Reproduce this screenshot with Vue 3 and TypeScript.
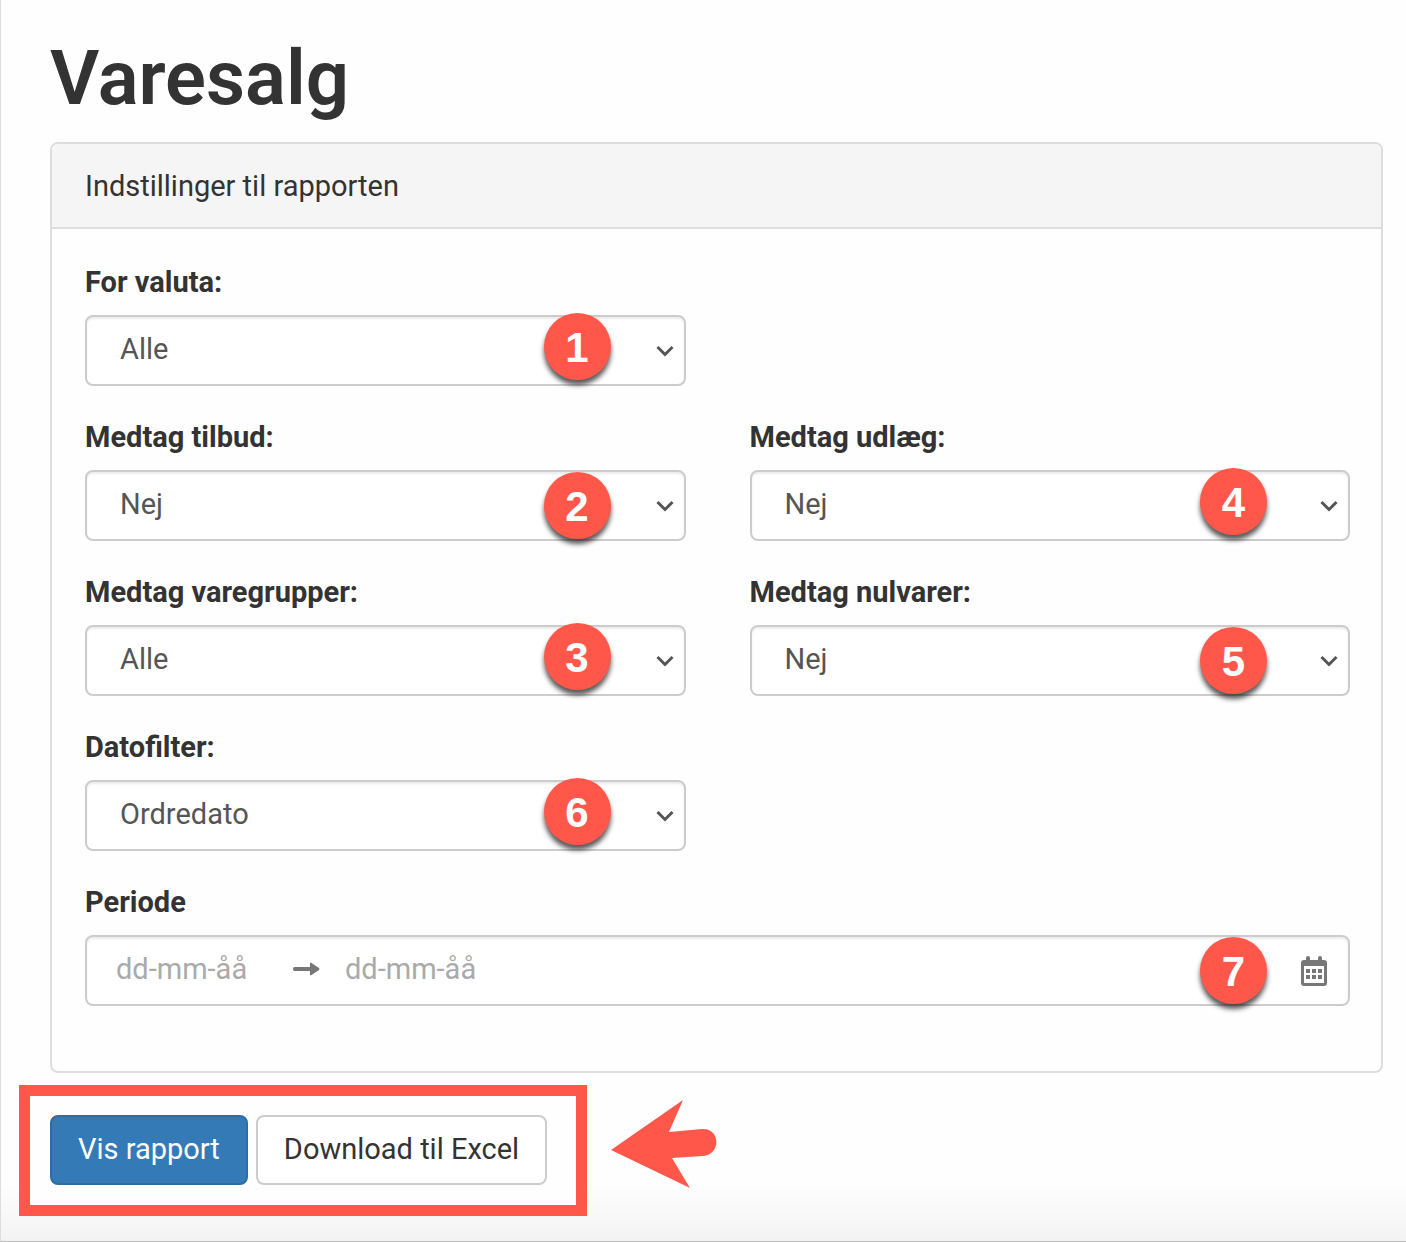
<script setup lang="ts">
import { reactive, ref } from 'vue'

interface SelectField {
  id: string
  label: string
  options: string[]
  step: number
  column: 'left' | 'right'
  shift: 'raised' | 'lowered'
}

const fields: SelectField[] = [
  { id: 'valuta', label: 'For valuta:', options: ['Alle'], step: 1, column: 'left', shift: 'raised' },
  { id: 'tilbud', label: 'Medtag tilbud:', options: ['Nej', 'Ja'], step: 2, column: 'left', shift: 'lowered' },
  { id: 'udlaeg', label: 'Medtag udlæg:', options: ['Nej', 'Ja'], step: 4, column: 'right', shift: 'raised' },
  { id: 'varegrupper', label: 'Medtag varegrupper:', options: ['Alle'], step: 3, column: 'left', shift: 'raised' },
  { id: 'nulvarer', label: 'Medtag nulvarer:', options: ['Nej', 'Ja'], step: 5, column: 'right', shift: 'lowered' },
  { id: 'datofilter', label: 'Datofilter:', options: ['Ordredato'], step: 6, column: 'left', shift: 'raised' },
]

const values = reactive<Record<string, string>>(
  Object.fromEntries(fields.map((f) => [f.id, f.options[0]])),
)
const from = ref('')
const to = ref('')
</script>

<template>
  <main class="page">
    <h1 class="title">Varesalg</h1>

    <form id="report" class="panel" @submit.prevent>
      <h2 class="panel-heading">Indstillinger til rapporten</h2>
      <div class="panel-body">
        <div v-for="f in fields" :key="f.id" class="field" :class="f.column">
          <label class="label" :for="f.id">{{ f.label }}</label>
          <div class="control">
            <select :id="f.id" v-model="values[f.id]" class="box select">
              <option v-for="o in f.options" :key="o">{{ o }}</option>
            </select>
            <svg class="chevron" viewBox="0 0 18 12" aria-hidden="true">
              <path d="M1.5 2 9 9.5 16.5 2" fill="none" stroke="#555" stroke-width="3" />
            </svg>
            <span class="badge" :class="f.shift">{{ f.step }}</span>
          </div>
        </div>

        <div class="field wide right">
          <label class="label" for="from">Periode</label>
          <div class="control">
            <div class="box period">
              <input id="from" v-model="from" class="date" type="text" placeholder="dd-mm-åå" />
              <svg class="arrow" viewBox="0 0 28 14" aria-hidden="true">
                <path d="M1.500 5H17V1.500Q17 0 18.500 1L26 6Q27 7 26 8L18.500 13Q17 14 17 12.500V9H1.500Q0 9 0 7T1.500 5Z" fill="#777" />
              </svg>
              <input v-model="to" class="date" type="text" placeholder="dd-mm-åå" aria-label="Periode til" />
              <button class="calendar" type="button" aria-label="Vælg datoer">
                <svg viewBox="0 0 28 32" width="28" height="32" aria-hidden="true">
                  <path
                    fill="#777"
                    fill-rule="evenodd"
                    d="M6 3Q6 1 8 1T10 3V5H18V3Q18 1 20 1T22 3V5H24a3 3 0 0 1 3 3v20a3 3 0 0 1-3 3H4a3 3 0 0 1-3-3V8a3 3 0 0 1 3-3h2ZM4 11v17h20V11Z"
                  />
                  <path
                    fill="#777"
                    d="M6 14h4v4H6zM12 14h4v4h-4zM18 14h4v4h-4zM6 20h4v4H6zM12 20h4v4h-4zM18 20h4v4h-4z"
                  />
                </svg>
              </button>
            </div>
            <span class="badge lowered">7</span>
          </div>
        </div>
      </div>
    </form>

    <div class="footer">
      <div class="actions">
        <button class="btn primary" type="submit" form="report">Vis rapport</button>
        <button class="btn" type="button">Download til Excel</button>
      </div>
      <svg class="pointer" viewBox="0 0 106 88" aria-hidden="true">
        <path
          fill="#ff584a"
          d="M0 50 72 0 58 32 91 29C110 28 110 55 92 56L61 58 79 88Z"
        />
      </svg>
    </div>
  </main>
</template>

<style>
body {
  margin: 0;
}
</style>

<style scoped>
.page {
  box-sizing: border-box;
  min-height: 100vh;
  padding: 36px 23px 24px 49px;
  border-left: 1px solid #ddd;
  border-bottom: 1px solid #bbb;
  background: linear-gradient(to top, #f3f3f3, #fefefe 60px);
  color: #333;
  font: 29px/42px Roboto, 'Liberation Sans', sans-serif;
}

.page * {
  box-sizing: border-box;
}

.title {
  margin: 0 0 22px;
  font-size: 76px;
  line-height: 84px;
  font-weight: 600;
}

.panel {
  border: 2px solid #ddd;
  border-radius: 8px;
  background: #fefefe;
}

.panel-heading {
  margin: 0;
  padding: 21px 33px 20px;
  border-bottom: 2px solid #ddd;
  border-radius: 6px 6px 0 0;
  background: #f5f5f5;
  font-size: inherit;
  font-weight: 400;
}

.panel-body {
  display: grid;
  grid-template-columns: 1fr 1fr;
  column-gap: 64px;
  row-gap: 30px;
  padding: 32px 31px 65px 33px;
}

.left {
  grid-column: 1;
}

.right {
  grid-column: 2;
}

.wide {
  grid-column: 1 / -1;
}

.label {
  display: block;
  margin-bottom: 12px;
  font-weight: 700;
}

.control {
  position: relative;
}

.box {
  display: flex;
  width: 100%;
  height: 71px;
  border: 2px solid #ccc;
  border-radius: 8px;
  background: #fff;
  box-shadow: inset 0 2px 2px rgba(0, 0, 0, 0.08);
  color: #555;
  font: inherit;
}

.select {
  padding: 0 64px 4px 33px;
  appearance: none;
}

.chevron {
  position: absolute;
  top: 30px;
  right: 12px;
  width: 18px;
  height: 12px;
  pointer-events: none;
}

.badge {
  position: absolute;
  right: 75px;
  width: 67px;
  height: 67px;
  border-radius: 50%;
  background: #ff584a;
  box-shadow: 0 5px 5px rgba(0, 0, 0, 0.65);
  color: #fff;
  font: 700 42px/69px 'Liberation Sans', Arial, sans-serif;
  text-align: center;
  pointer-events: none;
}

.right .badge {
  right: 83px;
}

.raised {
  top: -2px;
}

.lowered {
  top: 2px;
}

.period {
  align-items: center;
  padding: 0 20px 4px 29px;
}

.date {
  width: 153px;
  padding: 0;
  border: 0;
  background: none;
  color: #555;
  font: inherit;
}

.date::placeholder {
  color: #aaa;
  opacity: 1;
}

.arrow {
  width: 28px;
  height: 14px;
  margin: 0 24px;
}

.calendar {
  display: flex;
  margin-left: auto;
  padding: 4px 0 0;
  border: 0;
  background: none;
}

.footer {
  display: flex;
  align-items: center;
  gap: 24px;
  margin: 12px 0 0 -31px;
}

.actions {
  display: flex;
  gap: 8px;
  padding: 19px 29px 20px 20px;
  border: 11px solid #ff584a;
  background: #fefefe;
}

.btn {
  height: 70px;
  padding: 0 26px 2px;
  border: 2px solid #ccc;
  border-radius: 8px;
  background: #fff;
  color: #333;
  font: inherit;
}

.primary {
  border-color: #2e6da4;
  background: #337ab7;
  color: #fff;
}

.pointer {
  width: 106px;
  height: 88px;
  margin-bottom: 14px;
}
</style>
